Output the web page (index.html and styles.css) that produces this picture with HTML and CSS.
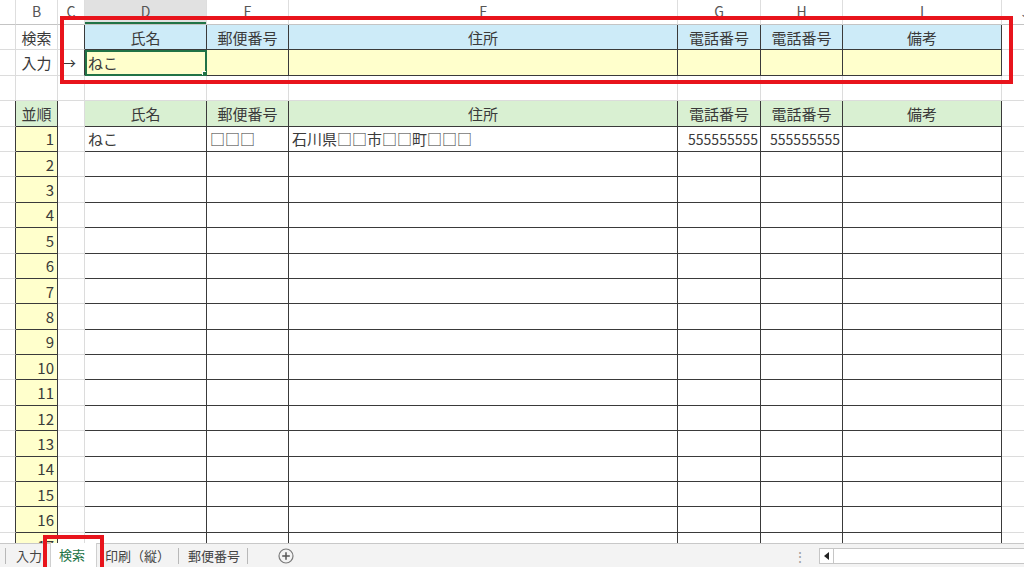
FILE: index.html
```html
<!DOCTYPE html>
<html lang="ja">
<head>
  <meta charset="UTF-8" />
  <title>検索 - 住所録</title>
  <link rel="stylesheet" href="styles.css">
</head>
<body>
  <div class="book">
    <div class="sheet">
      <table class="grid">
        <colgroup>
          <col class="col-a"><col class="col-b"><col class="col-c"><col class="col-d"><col class="col-e">
          <col class="col-f"><col class="col-g"><col class="col-h"><col class="col-i"><col class="col-j">
        </colgroup>
        <tr class="colhead">
          <td></td><td>B</td><td>C</td><td class="cur">D</td><td>E</td><td>F</td><td>G</td><td>H</td><td>I</td><td>J</td>
        </tr>
        <!-- search box -->
        <tr class="search">
          <td></td><td class="label">検索</td><td></td>
          <td class="hd">氏名</td><td class="hd">郵便番号</td><td class="hd">住所</td><td class="hd">電話番号</td><td class="hd">電話番号</td><td class="hd">備考</td>
          <td></td>
        </tr>
        <tr class="search">
          <td></td><td class="label">入力</td><td class="arrow">→</td>
          <td class="inp sel">ねこ</td><td class="inp"></td><td class="inp"></td><td class="inp"></td><td class="inp"></td><td class="inp"></td>
          <td></td>
        </tr>
        <tr><td></td><td></td><td></td><td></td><td></td><td></td><td></td><td></td><td></td><td></td></tr>
        <!-- result list -->
        <tr class="list">
          <td></td><td class="no-hd">並順</td><td></td>
          <td class="hd2">氏名</td><td class="hd2">郵便番号</td><td class="hd2">住所</td><td class="hd2">電話番号</td><td class="hd2">電話番号</td><td class="hd2">備考</td>
          <td></td>
        </tr>
        <tr class="list">
          <td></td><td class="no">1</td><td></td>
          <td>ねこ</td><td>□□□</td><td>石川県□□市□□町□□□</td><td class="tel">555555555</td><td class="tel">555555555</td><td></td>
          <td></td>
        </tr>
        <tr class="list"><td></td><td class="no">2</td><td></td><td></td><td></td><td></td><td></td><td></td><td></td><td></td></tr>
        <tr class="list"><td></td><td class="no">3</td><td></td><td></td><td></td><td></td><td></td><td></td><td></td><td></td></tr>
        <tr class="list"><td></td><td class="no">4</td><td></td><td></td><td></td><td></td><td></td><td></td><td></td><td></td></tr>
        <tr class="list"><td></td><td class="no">5</td><td></td><td></td><td></td><td></td><td></td><td></td><td></td><td></td></tr>
        <tr class="list"><td></td><td class="no">6</td><td></td><td></td><td></td><td></td><td></td><td></td><td></td><td></td></tr>
        <tr class="list"><td></td><td class="no">7</td><td></td><td></td><td></td><td></td><td></td><td></td><td></td><td></td></tr>
        <tr class="list"><td></td><td class="no">8</td><td></td><td></td><td></td><td></td><td></td><td></td><td></td><td></td></tr>
        <tr class="list"><td></td><td class="no">9</td><td></td><td></td><td></td><td></td><td></td><td></td><td></td><td></td></tr>
        <tr class="list"><td></td><td class="no">10</td><td></td><td></td><td></td><td></td><td></td><td></td><td></td><td></td></tr>
        <tr class="list"><td></td><td class="no">11</td><td></td><td></td><td></td><td></td><td></td><td></td><td></td><td></td></tr>
        <tr class="list"><td></td><td class="no">12</td><td></td><td></td><td></td><td></td><td></td><td></td><td></td><td></td></tr>
        <tr class="list"><td></td><td class="no">13</td><td></td><td></td><td></td><td></td><td></td><td></td><td></td><td></td></tr>
        <tr class="list"><td></td><td class="no">14</td><td></td><td></td><td></td><td></td><td></td><td></td><td></td><td></td></tr>
        <tr class="list"><td></td><td class="no">15</td><td></td><td></td><td></td><td></td><td></td><td></td><td></td><td></td></tr>
        <tr class="list"><td></td><td class="no">16</td><td></td><td></td><td></td><td></td><td></td><td></td><td></td><td></td></tr>
        <tr class="list"><td></td><td class="no">17</td><td></td><td></td><td></td><td></td><td></td><td></td><td></td><td></td></tr>
      </table>
      <div class="mark mark-search"></div>
    </div>

    <div class="tabs">
      <span class="sep"></span>
      <span class="tab">入力</span>
      <span class="tab active">検索</span>
      <span class="tab tab-print">印刷（縦）</span>
      <span class="sep"></span>
      <span class="tab tab-zip">郵便番号</span>
      <span class="sep"></span>
      <span class="add">
        <svg width="16" height="16" viewBox="0 0 16 16">
          <circle cx="8" cy="8" r="7" fill="none" stroke="#7a7a7a" stroke-width="1.2"/>
          <path d="M8 4.2v7.6M4.2 8h7.6" stroke="#555" stroke-width="1.5"/>
        </svg>
      </span>
      <span class="dots">⋮</span>
      <div class="hscroll">
        <span class="hscroll-btn"><span class="tri"></span></span>
      </div>
    </div>
    <div class="mark mark-tab"></div>
  </div>
</body>
</html>
```

FILE: styles.css
```css
:root {
  --grid: #dcdcdc;
  --line: #3a3a3a;
  --blue: #cdebf8;
  --yellow: #ffffcc;
  --green: #d9f0d2;
  --excel: #217346;
  --mark: #e8141c;
}

* {
  margin: 0;
  padding: 0;
  box-sizing: border-box;
}

body {
  width: 1024px;
  height: 567px;
  overflow: hidden;
  background: #fff;
  color: #3a3a3a;
  font-family: "Noto Sans CJK JP", "Noto Sans", sans-serif;
  font-size: 15px;
}

.book {
  position: relative;
  width: 1024px;
  height: 567px;
  overflow: hidden;
}

.sheet {
  position: relative;
  height: 543px;
  overflow: hidden;
}

.grid {
  width: 1050px;
  table-layout: fixed;
  border-collapse: separate;
  border-spacing: 0;
}

.col-a { width: 16px; }
.col-b { width: 42px; }
.col-c { width: 27px; }
.col-d { width: 122px; }
.col-e { width: 82px; }
.col-f { width: 389px; }
.col-g { width: 83px; }
.col-h { width: 82px; }
.col-i { width: 159px; }
.col-j { width: 48px; }

tr {
  height: 25.4px;
}

td {
  border-right: 1px solid var(--grid);
  border-bottom: 1px solid var(--grid);
  padding: 1px 3px 0;
  line-height: 20px;
  white-space: nowrap;
  overflow: hidden;
  vertical-align: middle;
}

/* column letters */
.colhead {
  height: 25px;
}

.colhead td {
  text-align: center;
  color: #555;
  font-size: 14px;
  padding-top: 0;
  padding-bottom: 3px;
  border-right-color: #dedede;
  border-bottom-color: #c4c4c4;
}

.colhead td.cur {
  background: #e1e1e1;
  box-shadow: inset 0 -2px 0 var(--excel);
}

/* search box */
.search td:nth-child(3) {
  border-right-color: var(--line);
}

.search td:nth-child(n+4):nth-child(-n+9) {
  border-right-color: var(--line);
  border-bottom-color: var(--line);
}

.label {
  text-align: center;
}

.arrow {
  padding-left: 3px;
}

.hd {
  background: var(--blue);
  text-align: center;
}

.inp {
  background: var(--yellow);
}

.sel {
  position: relative;
  outline: 2px solid var(--excel);
  outline-offset: -2px;
}

.sel::after {
  content: "";
  position: absolute;
  right: -4px;
  bottom: -4px;
  width: 6px;
  height: 6px;
  background: var(--excel);
  border: 1px solid #fff;
}

/* result list */
.list td:nth-child(1) {
  border-right-color: var(--line);
}

.list td:nth-child(2),
.list td:nth-child(n+4):nth-child(-n+9) {
  border-right-color: var(--line);
  border-bottom-color: var(--line);
}

.no-hd,
.hd2 {
  background: var(--green);
  text-align: center;
}

.no {
  background: var(--yellow);
  text-align: right;
}

.tel {
  text-align: right;
  padding-right: 2px;
  font-size: 14px;
}

/* red annotations */
.mark {
  position: absolute;
  border: 4px solid var(--mark);
  pointer-events: none;
}

.mark-search {
  left: 60px;
  top: 16px;
  width: 953px;
  height: 68px;
}

.mark-tab {
  left: 43px;
  top: 535px;
  width: 61px;
  height: 40px;
}

/* sheet tabs */
.tabs {
  display: flex;
  align-items: center;
  height: 24px;
  padding-left: 5px;
  background: #f3f3f3;
  border-top: 1px solid #c8c8c8;
  font-size: 13px;
  color: #444;
}

.sep {
  width: 1px;
  height: 16px;
  background: #b8b8b8;
}

.tab {
  padding: 0 8px 0 10px;
  line-height: 20px;
}

.tab.active {
  align-self: stretch;
  margin-top: -1px;
  padding: 2px 11px 0 8px;
  background: #fff;
  color: var(--excel);
  border-left: 1px solid #cfcfcf;
  border-right: 1px solid #cfcfcf;
}

.tab-print {
  padding: 0 8px 0 8px;
}

.tab-zip {
  padding: 0 7px 0 9px;
}

.add {
  display: flex;
  margin-left: 30px;
}

.dots {
  margin-left: auto;
  margin-right: 12px;
  color: #a0a0a0;
  font-size: 14px;
  line-height: 16px;
}

.hscroll {
  display: flex;
  width: 210px;
  height: 16px;
  margin-right: -5px;
  background: #fff;
  border: 1px solid #c6c6c6;
}

.hscroll-btn {
  display: flex;
  align-items: center;
  justify-content: center;
  width: 14px;
  border-right: 1px solid #c6c6c6;
}

.tri {
  width: 0;
  height: 0;
  border-top: 4px solid transparent;
  border-bottom: 4px solid transparent;
  border-right: 5px solid #222;
}
```
